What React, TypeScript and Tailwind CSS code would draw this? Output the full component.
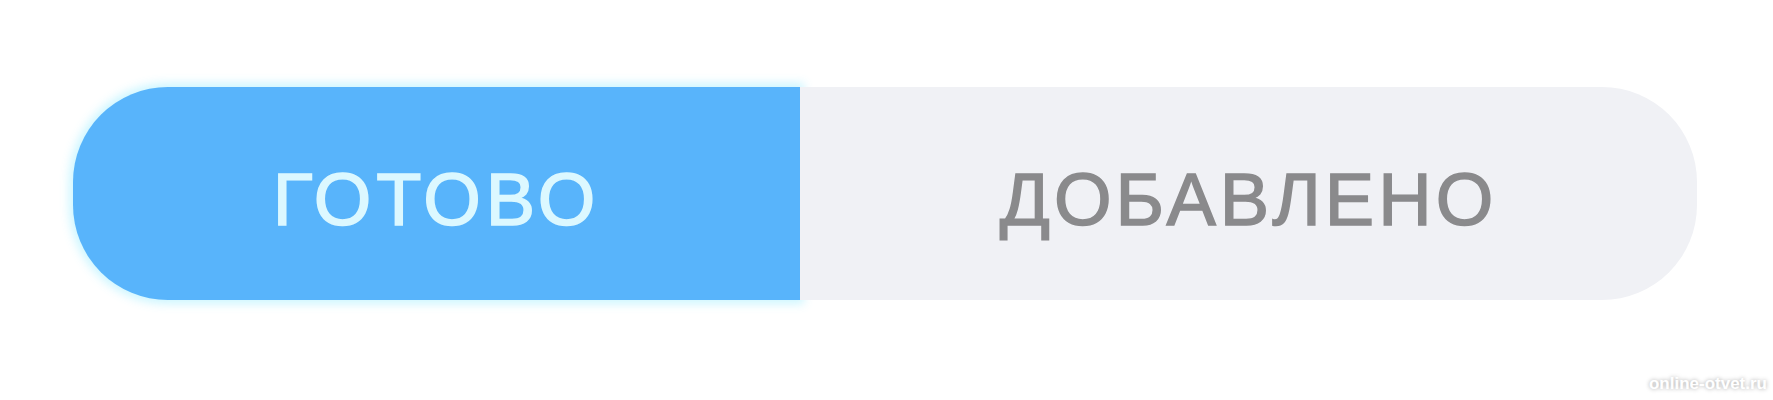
export default function App() {
  return (
    <div className="relative h-[400px] w-[1773px] bg-white overflow-hidden" style={{ fontFamily: '"Liberation Sans", Arial, sans-serif' }}>
      <div className="flex pl-[73px] pt-[87px]">
        <div className="flex h-[213px] w-[727px] items-center justify-center rounded-l-[95px] bg-[#58b4fb] shadow-[0_0_10px_4px_rgba(200,245,255,0.9)]">
          <span className="mt-[12px] text-[74px] leading-none tracking-[5px] text-[#dcf8ff] [-webkit-text-stroke:1.5px_#dcf8ff]">ГОТОВО</span>
        </div>
        <div className="flex h-[213px] w-[897px] items-center justify-center rounded-r-[95px] bg-[#f0f1f5]">
          <span className="mt-[12px] text-[74px] leading-none tracking-[4px] text-[#8a8a8c] [-webkit-text-stroke:1.5px_#8a8a8c]">ДОБАВЛЕНО</span>
        </div>
      </div>
      <div className="absolute bottom-[4px] right-[6px] text-[17px] font-bold text-white [text-shadow:0_0_4px_rgba(0,0,0,0.35)]">online-otvet.ru</div>
    </div>
  );
}
